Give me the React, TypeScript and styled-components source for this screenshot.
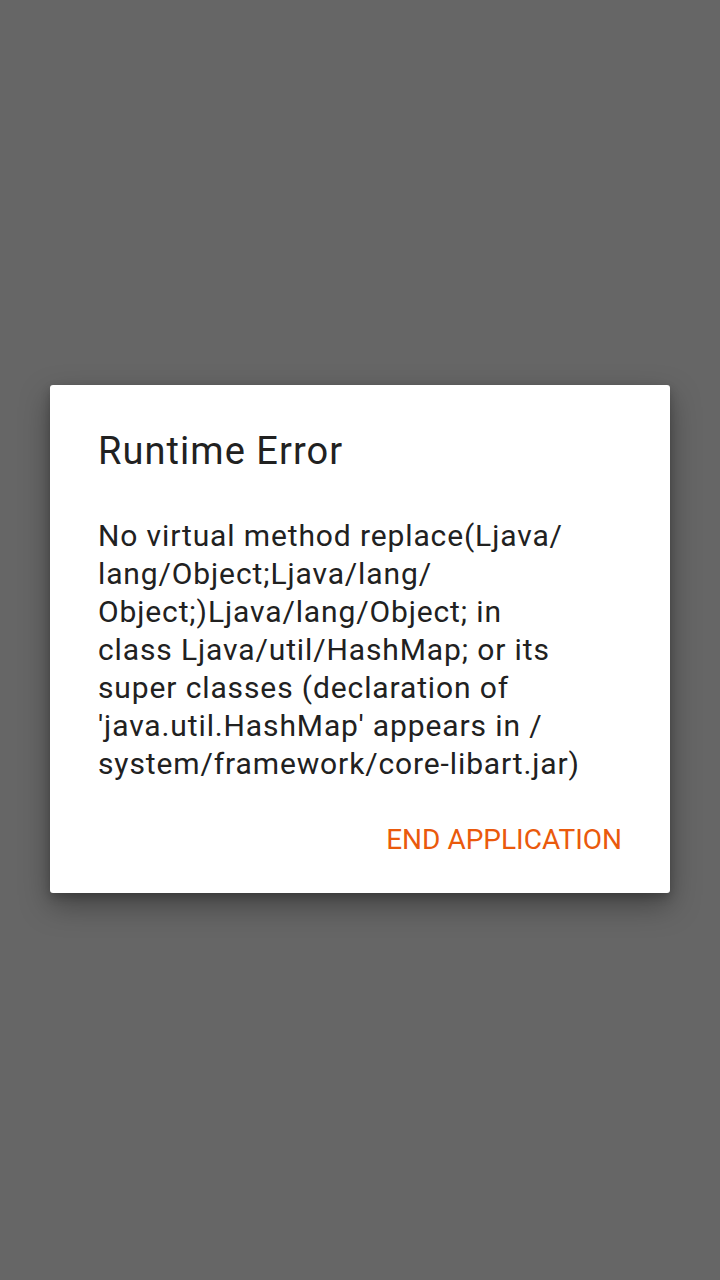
import { FC } from "react";
import styled, { createGlobalStyle } from "styled-components";

const GlobalStyle = createGlobalStyle`
    html, body {
        margin: 0;
        padding: 0;
        background: #666666;
    }
    #root {
        min-height: 1280px;
    }
`

const lines = [
    "No virtual method replace(Ljava/",
    "lang/Object;Ljava/lang/",
    "Object;)Ljava/lang/Object; in",
    "class Ljava/util/HashMap; or its",
    "super classes (declaration of",
    "'java.util.HashMap' appears in /",
    "system/framework/core-libart.jar)",
]

const ErrorDialog: FC<{ title: string; message: string[]; action: string }> = ({ title, message, action }) => (
    <Dialog>
        <Title>{title}</Title>
        <Message>
            {message.map((line, i) => (
                <Line key={i}>{line}</Line>
            ))}
        </Message>
        <Actions>
            <ActionButton>{action}</ActionButton>
        </Actions>
    </Dialog>
)

export default function App() {
    return (
        <>
            <GlobalStyle />
            <Screen>
                <ErrorDialog title="Runtime Error" message={lines} action="END APPLICATION" />
            </Screen>
        </>
    )
}

const Screen = styled.div`
    width: 720px;
    height: 1280px;
    background: #666666;
    display: flex;
    flex-direction: column;
    align-items: center;
    padding-top: 385px;
    box-sizing: border-box;
    font-family: Roboto, "Noto Sans", sans-serif;
`

const Dialog = styled.div`
    width: 620px;
    box-sizing: border-box;
    background: #ffffff;
    border-radius: 3px;
    padding: 43px 48px 35px 48px;
    box-shadow: 0 12px 30px rgba(0, 0, 0, 0.35), 0 4px 10px rgba(0, 0, 0, 0.2);
    display: flex;
    flex-direction: column;
`

const Title = styled.h1`
    margin: 0;
    font-size: 38px;
    line-height: 46px;
    font-weight: 400;
    letter-spacing: 1.05px;
    color: #212121;
`

const Message = styled.div`
    margin-top: 43px;
    font-size: 30px;
    line-height: 38px;
    letter-spacing: 0.88px;
    color: #212121;
`

const Line = styled.div`
    white-space: nowrap;
`

const Actions = styled.div`
    margin-top: 39px;
    display: flex;
    justify-content: flex-end;
`

const ActionButton = styled.button`
    border: none;
    background: none;
    padding: 0;
    font-family: inherit;
    font-size: 28px;
    line-height: 36px;
    font-weight: 400;
    color: #ea5a0c;
    cursor: pointer;
`
